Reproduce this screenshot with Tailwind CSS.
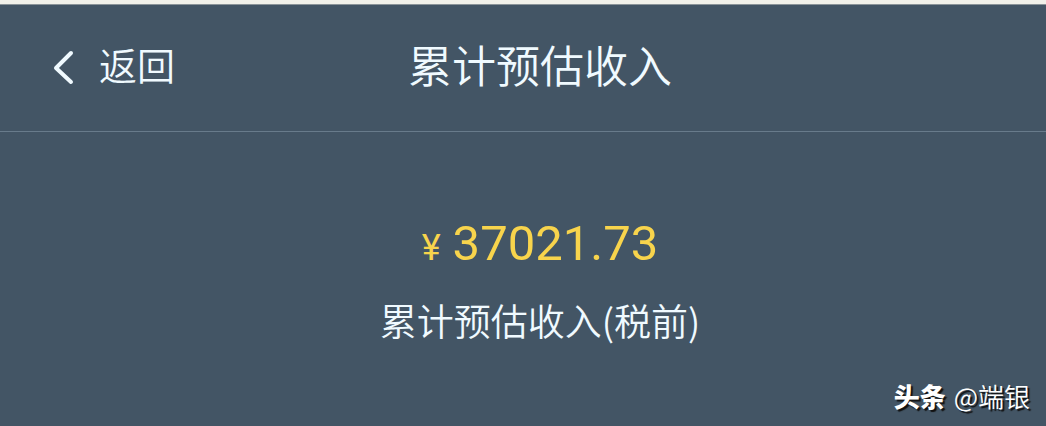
<!DOCTYPE html>
<html lang="zh-CN">
<head>
<meta charset="utf-8">
<meta name="viewport" content="width=device-width, initial-scale=1">
<title>累计预估收入</title>
<script src="https://cdn.jsdelivr.net/npm/@tailwindcss/browser@4"></script>
</head>
<body class="flex min-h-screen flex-col border-t-4 border-[#f1f1ea] bg-[#435565] font-['Noto_Sans_CJK_SC',sans-serif] font-[350] text-[#f0faff]">
<header class="grid grid-cols-[1fr_auto_1fr] items-center border-t border-b border-t-[#8b9499] border-b-[#687b8b] pt-7 pb-9 pl-[34px]">
  <button type="button" class="ml-4 flex items-center gap-6 justify-self-start pl-px text-[38px] leading-[60px]">
    <svg class="mt-2 h-9 w-6" viewBox="0 0 24 36" fill="none" stroke="currentColor" stroke-width="4" stroke-linecap="round" stroke-linejoin="round" aria-hidden="true"><path d="M20 3 5 18l15 14"/></svg>
    <span>返回</span>
  </button>
  <h1 class="text-[44px] leading-[62px] font-[350]">累计预估收入</h1>
</header>
<main class="flex flex-1 flex-col items-center pt-20 pl-[34px]">
  <p class="flex items-baseline gap-3 font-['Roboto',sans-serif] text-[49px] leading-[64px] font-normal text-[#f8d44c]"><span class="text-[36px]">¥</span><span>37021.73</span></p>
  <p class="mt-2.5 text-[37px] leading-[60px]">累计预估收入(税前)</p>
</main>
<footer class="absolute right-4 bottom-2.5 flex items-center gap-2 text-[26px] leading-10 text-white [text-shadow:2px_2px_1px_#111]">
  <span class="font-black">头条</span><span>@端银</span>
</footer>
</body>
</html>
